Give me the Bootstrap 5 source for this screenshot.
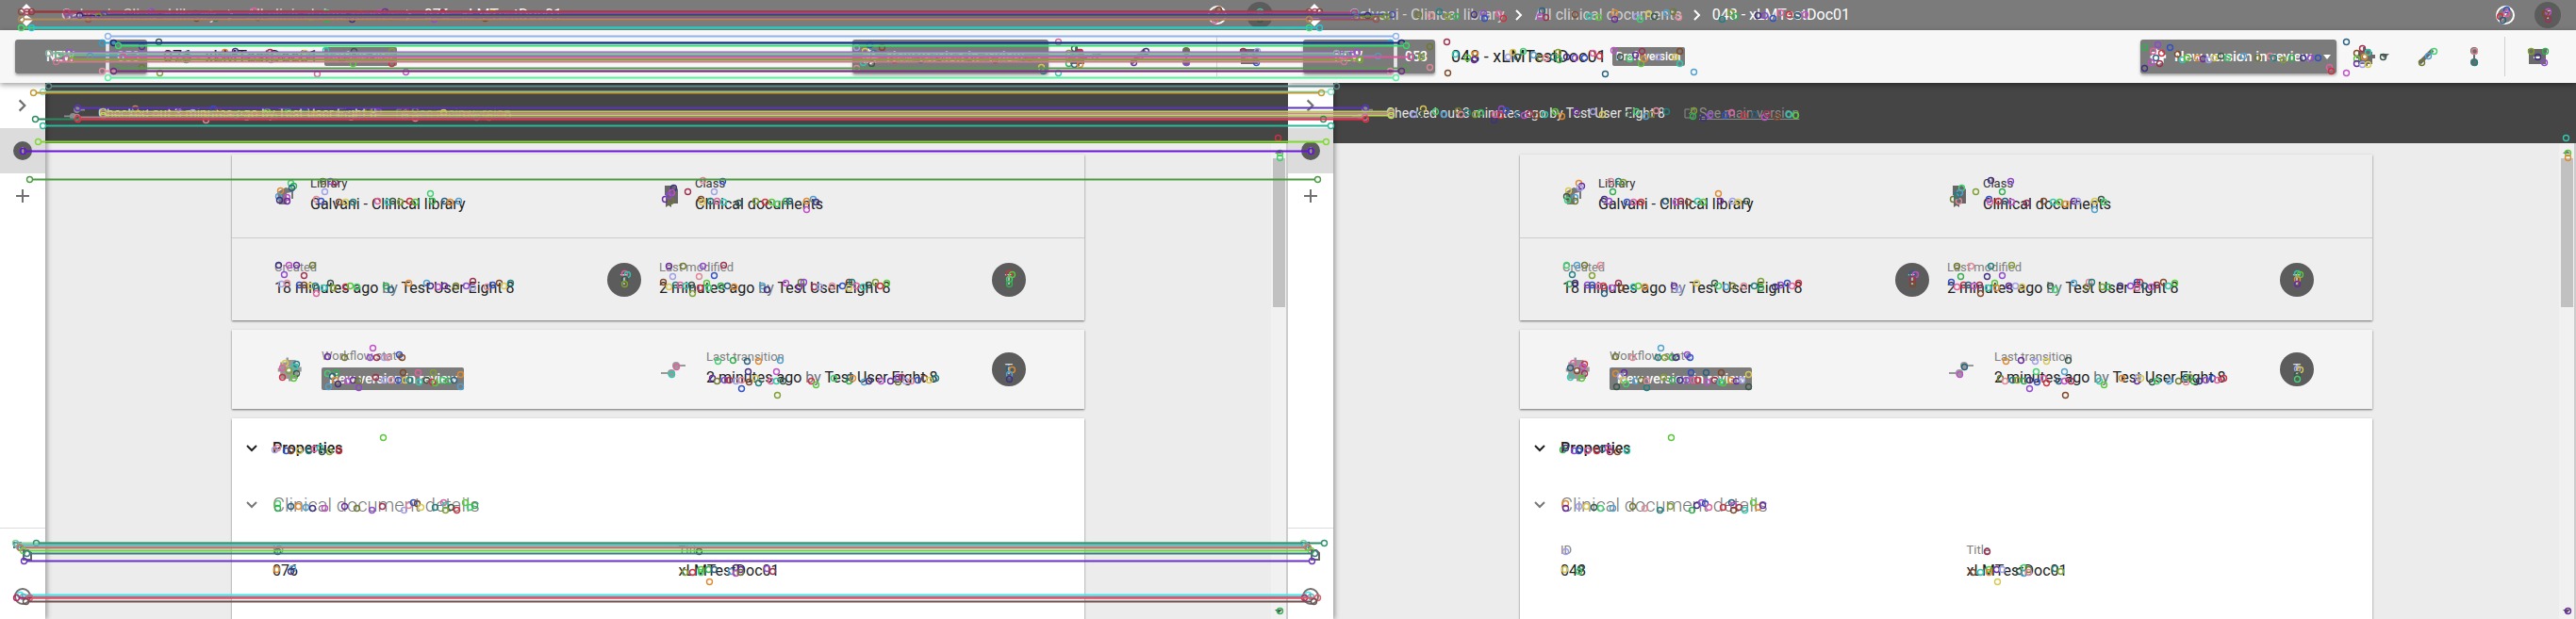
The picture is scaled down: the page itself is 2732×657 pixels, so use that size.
<!DOCTYPE html>
<html lang="en">
<head>
<meta charset="utf-8">
<meta name="viewport" content="width=device-width, initial-scale=1">
<title>Clinical documents – feature comparison</title>
<link href="https://cdn.jsdelivr.net/npm/bootstrap@5.3.0/dist/css/bootstrap.min.css" rel="stylesheet">
<style>
body{font-family:Roboto,"Liberation Sans",sans-serif;font-size:16px;line-height:24px;color:#212121;background:#ececec;overflow:hidden}
svg{display:block;flex:none}
.topbar{height:32px;flex:none;background:#7b7b7b;color:#fff;padding:0 16px}
.topbar a{color:#d2d2d2;text-decoration:none}
.crumbs{gap:8px;margin-left:25px}
.session{gap:21px}
.tools{height:56px;flex:none;background:#f7f7f7;padding:0 15px 0 16px;box-shadow:0 2px 6px #0006;z-index:2;position:relative}
.act{height:36px;background:#7b7b7b;color:#fff;border:0;border-radius:3px;font-size:14px;font-weight:500;box-shadow:0 2px 3px #0005;padding:0}
.act-new{width:96px}
.act-side{width:40px}
.act-state{width:208px;padding:0 8px;font-size:15px;margin-right:18px}
.doc-title{font-size:18px;margin:0 6px 0 17px;font-weight:400}
.tag{background:#7b7b7b;color:#fff;font-weight:500;border-radius:2px;line-height:20px;font-size:12px;padding:0 4px}
.tag-state{font-size:14px;line-height:24px;padding:0 8px;margin-top:4px;width:151px}
.plain{border:0;background:none;padding:0;color:#6b6b6b;display:flex;align-items:center}
.tool-gap{margin-left:28px}
.rule{width:1px;height:42px;background:#d0d0d0;margin-left:22px}
.rail{width:48px;background:#fff;box-shadow:2px 0 5px #0005;z-index:1;flex:none}
.rail .plain{width:48px;height:48px;justify-content:center}
.rail .on{background:#dcdcdc}
.rail-foot{border-top:1px solid #dcdcdc}
.face{border-radius:50%;background:#5c5c5c;color:#ddd;display:flex;align-items:center;justify-content:center;flex:none}
.face-s{width:20px;height:20px;font-size:9px}
.face-m{width:28px;height:28px;font-size:12px}
.face-l{width:36px;height:36px;font-size:14px}
.notice{height:64px;background:#454545;color:#e6e6e6;font-size:14px;padding-left:20px;flex:none}
.notice a{color:#8d8d8d;gap:4px;margin-left:20px}
.notice-text{padding-left:14px}
.sheets{width:904px;max-width:100%;gap:10px;padding-top:12px}
.sheet{box-shadow:0 1px 2px #0008;background:#eee}
.facts{padding:0 62px 0 45px;gap:19px;min-height:88px}
.facts>div{flex:1 1 0}
.facts+.facts{border-top:1px solid #ccc}
.state{background:#f4f4f4}
.state .facts{min-height:84px}
.lab{font-size:13px;line-height:16px;color:#808080}
.fact .lab{margin-bottom:2px}
.lab-dark{color:#333}
.beside{padding-left:14px}
.props{background:#fff;min-height:240px}
.fold{padding:0 13px;gap:14px;height:64px;color:#212121;font-weight:500}
.fold-sub{height:56px;font-size:20px;font-weight:300;color:#777}
.fields{padding:12px 0 0 43px}
.fields>div{flex:1 1 0}
.track{width:18px;background:#f1f1f1;border-right:2px solid #ccc;flex:none;padding-top:6px}
.thumb{width:13px;height:158px;background:#c1c1c1;margin-top:4px}
.marks{inset:0;z-index:5;pointer-events:none}
</style>
<script src="https://cdn.jsdelivr.net/npm/bootstrap@5.3.0/dist/js/bootstrap.bundle.min.js"></script>
</head>
<body class="vh-100">
<div class="position-relative vh-100">
  <div class="row g-0 vh-100" id="panels"></div>
  <svg class="marks position-absolute w-100" viewBox="0 0 2732 657" preserveAspectRatio="xMinYMin meet" aria-hidden="true" id="marks"></svg>
</div>
<script>
const chevron = (d, c, s = 16) => `<svg width="${s}" height="${s}" viewBox="0 0 16 16" fill="none" stroke="${c}" stroke-width="2"><path d="${d}"/></svg>`;
const right = 'M5 3l5 5-5 5', down = 'M3 5l5 5 5-5';
const branch = (c, w) => `<svg width="${w}" height="20" viewBox="0 0 26 20" fill="none" stroke="${c}" stroke-width="2"><path d="M0 14h8M18 6h8"/><circle cx="11" cy="14" r="3" fill="${c}"/><circle cx="16" cy="6" r="3" fill="${c}"/></svg>`;
const gear = (c, s) => `<svg width="${s}" height="${s}" viewBox="0 0 24 24" fill="${c}"><path d="M10 2h2v2h6v3h2v3h3v4h-3v6h-5v2h-3v-2H5v-6H3v-3h2V6h5z"/><circle cx="12" cy="12" r="2" fill="#fff"/></svg>`;

const fact = (label, value, extra = '') => `<div class="fact flex-grow-1"><div class="lab ${extra}">${label}</div><div>${value}</div></div>`;

const panel = (id, title) => `
<section class="col-6 d-flex flex-column vh-100 overflow-hidden">
  <header class="topbar d-flex align-items-center">
    <svg width="24" height="26" viewBox="0 0 24 26" fill="#fff"><path d="M12 1l7 7-7 5-7-5zM12 25l7-7-7-5-7 5z"/></svg>
    <nav class="crumbs d-flex align-items-center" aria-label="Path">
      <a href="#">Galvani - Clinical library</a>${chevron(right, '#fff')}
      <a href="#">All clinical documents</a>${chevron(right, '#fff')}
      <span>${id} - ${title}</span>
    </nav>
    <div class="session ms-auto d-flex align-items-center">
      <button class="plain" aria-label="Activity"><svg width="20" height="20" viewBox="0 0 20 20" fill="none" stroke="#fff" stroke-width="2"><circle cx="10" cy="10" r="9"/><path d="M6 15l7-10"/></svg></button>
      <span class="face face-m">T</span>
    </div>
  </header>
  <div class="tools d-flex align-items-center">
    <button class="act act-new">NEW</button>
    <button class="act act-side ms-1">053</button>
    <h1 class="doc-title">${id} - ${title}</h1>
    <span class="tag">Draft version</span>
    <div class="ms-auto d-flex align-items-center">
      <button class="act act-state d-flex align-items-center gap-2 text-nowrap">${gear('#fff', 20)}New version in review<svg class="ms-1" width="8" height="5" viewBox="0 0 8 5" fill="#fff"><path d="M0 0h8L4 5z"/></svg></button>
      <button class="plain gap-1" aria-label="Actions">${gear('#6b6b6b', 24)}<svg width="10" height="6" viewBox="0 0 10 6" fill="#6b6b6b"><path d="M0 0h10L5 5z"/></svg></button>
      <button class="plain tool-gap" aria-label="Edit"><svg width="24" height="20" viewBox="0 0 24 20" stroke="#6b6b6b" stroke-width="4"><path d="M4 17L18 3"/></svg></button>
      <button class="plain tool-gap" aria-label="Versions"><svg width="20" height="20" viewBox="0 0 20 20" fill="#6b6b6b"><circle cx="10" cy="4" r="4"/><path d="M9 5h2v10H9z"/><circle cx="10" cy="16" r="4"/></svg></button>
      <span class="rule"></span>
      <button class="plain ms-4 me-3" aria-label="Archive"><svg width="20" height="18" viewBox="0 0 20 18" fill="#6b6b6b"><path d="M0 1h20v4h-1v12H1V5H0z"/><path d="M6 9h8v2H6z" fill="#fff"/></svg></button>
    </div>
  </div>
  <div class="d-flex flex-grow-1 overflow-hidden">
    <aside class="rail d-flex flex-column">
      <button class="plain" aria-label="Expand">${chevron(right, '#707070', 18)}</button>
      <button class="plain on" aria-label="User"><span class="face face-s">i</span></button>
      <button class="plain" aria-label="Add"><svg width="14" height="14" viewBox="0 0 14 14" stroke="#707070" stroke-width="2"><path d="M7 0v14M0 7h14"/></svg></button>
      <div class="rail-foot mt-auto">
        <button class="plain" aria-label="Tools"><svg width="22" height="24" viewBox="0 0 22 24" fill="none" stroke="#666" stroke-width="2"><path d="M2 9V3h7v6M6 4v6M12 21h8v-7l-3-3h-5z"/></svg></button>
        <button class="plain" aria-label="Help"><svg width="18" height="18" viewBox="0 0 18 18" fill="none" stroke="#707070" stroke-width="2"><circle cx="9" cy="9" r="8"/><path d="M9 7v6"/></svg></button>
      </div>
    </aside>
    <main class="d-flex flex-column flex-grow-1 overflow-hidden">
      <div class="notice d-flex align-items-center">
        ${branch('#8d8d8d', 22)}
        <span class="notice-text">Checked out 3 minutes ago by Test User Eight 8</span>
        <a href="#" class="d-flex align-items-center"><svg width="12" height="12" viewBox="0 0 12 12" fill="none" stroke="#8d8d8d"><path d="M6 2H1v9h9V6M7 1h4v4M11 1L5 7"/></svg>See main version</a>
      </div>
      <div class="d-flex flex-grow-1 overflow-hidden">
        <div class="flex-grow-1 d-flex justify-content-center">
          <div class="sheets d-flex flex-column">
            <div class="sheet">
              <div class="facts d-flex align-items-center">
                <div class="d-flex align-items-center"><svg width="24" height="24" viewBox="0 0 24 24" fill="#777"><path d="M3 8l9-5 8 2v10h-2V8l-5 1v12H5z"/></svg><div class="beside">${fact('Library', 'Galvani - Clinical library', 'lab-dark')}</div></div>
                <div class="d-flex align-items-center"><svg width="24" height="26" viewBox="0 0 24 26" fill="#666"><path d="M6 2h10l4 4v15h-7v4l-3-2-3 2V12H6z"/></svg><div class="beside">${fact('Class', 'Clinical documents', 'lab-dark')}</div></div>
              </div>
              <div class="facts d-flex align-items-center">
                <div class="d-flex align-items-center">${fact('Created', '18 minutes ago <span class="text-secondary">by</span> Test User Eight 8')}<span class="face face-l">T</span></div>
                <div class="d-flex align-items-center">${fact('Last modified', '2 minutes ago <span class="text-secondary">by</span> Test User Eight 8')}<span class="face face-l">T</span></div>
              </div>
            </div>
            <div class="sheet state">
              <div class="facts d-flex align-items-center">
                <div class="d-flex align-items-center">${gear('#999', 30)}<div class="ps-3 ms-1"><div class="lab">Workflow state</div><div class="tag tag-state text-nowrap">New version in review</div></div></div>
                <div class="d-flex align-items-center">${branch('#999', 30)}<div class="ps-3 ms-1 flex-grow-1">${fact('Last transition', '2 minutes ago <span class="text-secondary">by</span> Test User Eight 8')}</div><span class="face face-l">T</span></div>
              </div>
            </div>
            <div class="sheet props">
              <button class="plain fold w-100">${chevron(down, '#212121')}Properties</button>
              <button class="plain fold fold-sub w-100">${chevron(down, '#777')}Clinical document details</button>
              <div class="fields d-flex">${fact('ID', id)}${fact('Title', title)}</div>
            </div>
          </div>
        </div>
        <div class="track d-flex flex-column align-items-center">
          <svg width="8" height="6" viewBox="0 0 8 6" fill="#777"><path d="M0 5h8L4 1z"/></svg>
          <div class="thumb"></div>
          <svg class="mt-auto mb-1" width="8" height="8" viewBox="0 0 8 8" fill="#555"><path d="M0 2h8L4 6z"/></svg>
        </div>
      </div>
    </main>
  </div>
</section>`;
document.getElementById('panels').innerHTML = panel('076', 'xLMTestDoc01') + panel('048', 'xLMTestDoc01');

/* Keypoints found in both panels: x,y within a panel */
const points = `71,13 138,15 151,16 160,12 169,17 178,17 197,15 207,14 208,19 223,14 228,19 269,11 267,17 273,18 304,15 319,17 329,18 346,13 346,20 369,17 382,14 388,17 373,20 401,13 408,12 414,18 460,20 469,13 474,17 498,16 505,16 514,19 522,13 531,15 540,16 548,15
168,44 169,77 177,57 190,61 198,57 197,63 233,60 238,55 243,60 249,54 260,58 267,61 273,61 281,60 286,55 287,63 295,60 304,61 314,61 323,56 330,59 336,78 345,53 375,54 415,54 415,67 374,67 377,62 368,58 392,60 410,60 352,60 362,62 430,76 150,49 150,71 131,60 141,60
908,50 908,72 922,47 935,50 917,54 926,56 920,61 915,66 924,67 943,57 948,63 953,61 964,61 970,62 976,63 982,61 989,59 996,61 1013,59 1028,61 1041,59 1045,61 1055,63 1064,61 1076,61 1084,61 1092,61 1104,71 1106,75 1122,44 1122,77
1139,51 1133,56 1145,55 1133,62 1141,60 1133,67 1139,68 1145,68 1161,60 1215,54 1209,59 1202,66 1258,54 1258,66 1318,54 1333,54 1325,60 1332,66 1292,10 1292,14 1285,17 1288,21 1336,12 1336,20 1333,14 1355,146 1357,162 1357,167 1357,648
133,121 143,115 140,120 156,118 165,121 180,117 183,121 190,119 198,121 204,119 218,127 226,115 231,117 219,121 225,122 244,121 250,122 256,120 263,122 272,121 283,118 290,123 305,118 323,118 333,121 359,121 369,118 379,123 385,121 390,117 401,118 430,117 429,123 440,125 447,122 463,122 470,119 483,122 494,121 505,124 508,120 518,124 531,121 538,122
308,194 311,197 309,199 297,202 295,208 296,212 304,209 304,213 342,192 350,192 355,193 344,203 335,211 340,213 359,214 366,214 374,214 400,213 411,214 416,213 424,214 434,213 440,214 456,205 458,213 471,213 477,214 486,213
295,281 306,281 314,281 331,281 301,291 322,292 298,301 304,300 317,302 322,302 329,303 334,303 335,311 343,305 350,300 353,305 366,304 371,303 378,304 409,303 414,307 433,300 452,300 456,303 464,304 471,303 483,303 494,303 501,298 501,305 516,304 522,302 529,300 534,303 541,300
662,290 665,291 662,296 662,301 1070,290 1073,291 1070,296 1070,301 1070,391 1073,392 1070,397 1070,402
395,369 347,378 365,379 392,379 399,379 407,379 411,379 423,376 426,379 302,385 314,386 299,390 312,389 314,396 306,393 299,400 311,401
347,396 356,395 352,399 355,403 348,410 358,407 368,404 374,403 380,404 380,411 398,400 407,403 415,403 422,403 427,395 429,403 434,403 443,395 444,405 452,403 459,395 458,405 461,406 469,403 475,404 481,403 488,397 488,410
714,199 712,204 705,211 711,213 709,207 729,203 757,203 745,191 766,192 743,211 744,214 753,213 760,213 767,214 783,215 801,213 811,214 818,214 824,216 833,213 837,213 855,213 862,211 865,214 855,222
709,282 724,282 745,282 767,281 713,293 741,293 757,292 703,299 709,304 716,302 721,302 727,303 733,302 734,311 742,305 749,300 751,305 764,303 771,303 778,304 808,303 813,307 833,300 847,304 849,299 852,299 863,304 869,304 882,303 893,303 900,299 900,305 903,299 908,303 915,304 921,302 928,299 933,303 940,300
761,383 777,382 792,383 804,383 827,382 793,394 823,394 755,401 760,404 768,403 773,403 780,404 786,403 786,412 794,405 801,401 804,406 817,404 823,404 830,404 824,419 860,404 865,408 884,401 900,404 901,400 904,401 916,405 921,404 934,404 944,404 952,405 952,400 956,400 960,404 966,404 973,403 980,401 985,403 992,401 717,389 712,397
741,585 726,607 734,607 743,604 743,607 751,604 757,604 752,617 775,606 780,602 780,608 785,604 785,607 813,603 819,606
291,477 294,475 303,478 308,478 317,478 327,478 333,476 339,475 341,479 349,479 359,478 406,464
294,534 294,539 308,537 316,537 324,538 331,539 344,539 365,537 378,539 394,541 405,537 428,541 433,536 438,533 442,534 446,538 461,538 470,533 472,536 478,538 472,541 484,541 493,533 498,538 503,536 294,585 293,604 310,603 308,606`.trim().split(/\s+/).map(p => p.split(',').map(Number));

/* Matched pairs: x, y, colour; each runs to the same place in the second panel */
const matches = [
 [22,12,'#8c4b40'],[28,12,'#b53f6e'],[33,12,'#8a4038'],[70,13,'#b53f6e'],[110,15,'#4a4ea8'],[84,16,'#3a2478'],[104,17,'#6c9424'],[72,18,'#7d55b0'],[93,20,'#9a5050'],[22,20,'#b08a50'],[22,29,'#3fdf6a'],[33,29,'#20c8d8'],
 [114,38,'#8fb4ea'],[108,45,'#2a9fd0'],[120,45,'#1d2a80'],[125,48,'#35dd6a'],[73,55,'#9a55c8'],[51,56,'#8fb0a0'],[61,58,'#70b890'],[95,59,'#5a9ab8'],[130,60,'#e0559a'],[70,62,'#d060b0'],[76,63,'#6ab020'],[59,65,'#d07890'],[125,72,'#5a9a50'],[108,75,'#e88aa8'],[120,75,'#6a3080'],[114,82,'#5cf0a0'],
 [51,91,'#5a8a8a'],[45,97,'#86e0c0'],[35,98,'#c09a30'],[82,114,'#5a35c0'],[109,118,'#b8d050'],[109,120,'#d080a0'],[109,122,'#b8e050'],[81,124,'#b08090'],[37,126,'#2a8a60'],[82,126,'#e8304a'],[45,133,'#28b89a'],[40,150,'#80d830'],[24,160,'#6a10e0'],[31,190,'#4a9a40'],
 [16,576,'#80d090'],[38,576,'#2a9068'],[18,578,'#50b8d0'],[20,580,'#a0a080'],[21,581,'#c07070'],[24,584,'#60d840'],[28,587,'#3a7a80'],[25,595,'#6a30c8'],
 [21,631,'#40e8e8'],[24,633,'#70b0c8'],[17,634,'#c02060'],[31,634,'#e05a68'],[27,638,'#705050']];
const tones = ['#c050c8','#208080','#e08a30','#3050c8','#40d070','#a03050','#80a030','#6a2aa0','#e060a0','#50a0d0','#804828','#30b050','#a0a0e8','#d03040','#707830','#30c8b0','#403080','#d8c850','#2a6080','#e08898','#58c838','#9048d0','#385848'];
const ring = (x, y, c) => `<circle cx="${x}" cy="${y}" r="3" stroke="${c}"/>`;
let art = '';
points.forEach(([x, y], i) => {
  art += ring(x, y, tones[(i * 7) % 23]) + ring(x + 1366, y, tones[(i * 5 + 9) % 23]);
});
matches.forEach(([x, y, c]) => {
  art += `<path d="M${x + 3} ${y}H${x + 1363}" stroke="${c}" stroke-width="1.8"/>` + ring(x, y, c) + ring(x + 1366, y, c);
});
document.getElementById('marks').innerHTML = `<g fill="none" stroke-width="1.4" transform="translate(.5 .5)">${art}</g>`;
</script>
</body>
</html>
